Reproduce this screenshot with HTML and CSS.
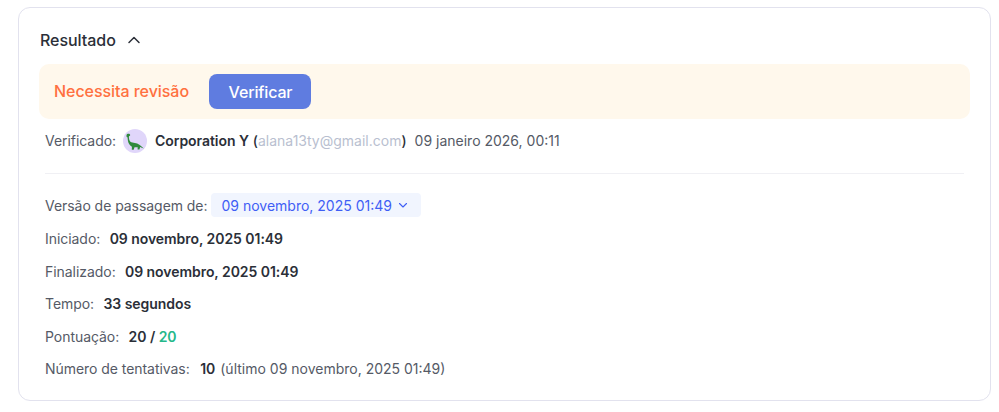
FILE: index.html
```html
<!DOCTYPE html>
<html lang="pt">
<head>
  <meta charset="UTF-8">
  <title>Resultado</title>
  <link rel="stylesheet" href="styles.css">
</head>
<body>
  <section class="card">
    <div class="card-title">
      <span>Resultado</span>
      <svg class="chevron-up" width="14" height="14" viewBox="0 0 14 14" fill="none"><path d="M2 9.500 7 4.500l5 5" stroke="#2b2f38" stroke-width="1.500" stroke-linecap="round" stroke-linejoin="round"/></svg>
    </div>

    <div class="banner">
      <span class="banner-text">Necessita revisão</span>
      <button class="verify-btn">Verificar</button>
    </div>

    <div class="verified">
      <span class="label">Verificado:</span>
      <span class="avatar">
        <svg width="24" height="24" viewBox="0 0 24 24"><path d="M3.500 6.200C3.800 4.800 5.800 4.400 6.800 5.300c.7.700.4 1.500-.4 1.700-.5.200-.6.600-.5 1.300.1 1.800.4 3.400 1.500 4.500 1.100 1 2.800.9 4.500 1.200 3 .5 6 2.300 8.900 5.600-1.500-.6-2.700-1.200-3.700-1.500l-.6 2.500h-1.900l.1-2.300-3.200-.1-.8 2.500H8.800l.1-3c-2.400-1.200-3.700-3.500-4.100-6.700-.1-1-.2-2-.3-2.700-.5 0-1.100-.6-1-1.300z" fill="#2f8a3c"/></svg>
      </span>
      <span class="name">Corporation Y</span>
      <span class="paren">(<span class="email">alana13ty@gmail.com</span>)</span>
      <span class="date">09 janeiro 2026, 00:11</span>
    </div>

    <hr class="divider">

    <div class="details">
      <div class="row row-version">
        <span class="label">Versão de passagem de:</span>
        <span class="version-select">
          09 novembro, 2025 01:49
          <svg width="10" height="10" viewBox="0 0 10 10" fill="none"><path d="M1.500 3.500 5 7l3.500-3.500" stroke="#3f5ef5" stroke-width="1.100" stroke-linecap="round" stroke-linejoin="round"/></svg>
        </span>
      </div>
      <div class="row"><span class="label">Iniciado:</span><b>09 novembro, 2025 01:49</b></div>
      <div class="row"><span class="label">Finalizado:</span><b>09 novembro, 2025 01:49</b></div>
      <div class="row"><span class="label">Tempo:</span><b>33 segundos</b></div>
      <div class="row"><span class="label">Pontuação:</span><b>20 / <span class="score">20</span></b></div>
      <div class="row row-tries"><span class="label">Número de tentativas:</span><b>10</b><span class="last-try">(último 09 novembro, 2025 01:49)</span></div>
    </div>
  </section>
</body>
</html>
```

FILE: styles.css
```css
body {
  margin: 0;
  padding: 7px 8px 11px 18px;
  background: #ffffff;
  font-family: Inter, sans-serif;
  font-size: 14px;
  letter-spacing: -0.05px;
  color: #555a66;
}

.card {
  box-sizing: border-box;
  width: 973px;
  height: 394px;
  padding: 20px 20px 0;
  border: 1px solid #e2e2ee;
  border-radius: 12px;
}

.card-title {
  display: flex;
  align-items: center;
  gap: 11px;
  height: 24px;
  padding-left: 1px;
  font-size: 16px;
  font-weight: 500;
  color: #2b2f38;
}

.banner {
  display: flex;
  align-items: center;
  gap: 20px;
  height: 55px;
  margin-top: 12px;
  padding: 0 15px;
  border-radius: 10px;
  background: #fff8ec;
}

.banner-text {
  font-size: 16px;
  font-weight: 500;
  line-height: 22px;
  margin-top: -1px;
  color: #ff7040;
}

.verify-btn {
  width: 102px;
  height: 35px;
  padding: 0 0 0 1px;
  border: none;
  border-radius: 8px;
  background: #5f7ce0;
  color: #ffffff;
  font-family: inherit;
  font-size: 16px;
  font-weight: 500;
  letter-spacing: -0.15px;
}

.verified {
  display: flex;
  align-items: center;
  height: 24px;
  margin-top: 10px;
  padding-left: 6px;
}

.verified .label {
  margin-top: -1px;
}

.avatar {
  display: flex;
  width: 24px;
  height: 24px;
  margin-left: 7px;
  border-radius: 50%;
  background: #e0d6fa;
}

.name,
.paren,
.date {
  margin-top: -1px;
}

.name {
  margin-left: 8px;
  font-weight: 600;
  color: #2b2f38;
}

.paren {
  margin-left: 4px;
  font-weight: 500;
  color: #2b2f38;
}

.email {
  font-weight: 400;
  letter-spacing: 0;
  color: #b9bfd0;
}

.date {
  margin-left: 8px;
  letter-spacing: 0;
}

.divider {
  height: 1px;
  margin: 20px 6px 19px;
  border: none;
  background: #f0f0f4;
}

.details {
  display: flex;
  flex-direction: column;
  gap: 8.6px;
  padding-left: 6px;
}

.row {
  display: flex;
  align-items: center;
  gap: 9.4px;
  height: 24px;
}

.row b {
  font-weight: 600;
  color: #2b2f38;
}

.row-version {
  gap: 4px;
  margin-bottom: 1px;
}

.row-tries {
  gap: 10.5px;
}

.version-select {
  display: flex;
  align-items: center;
  gap: 6px;
  height: 24px;
  padding: 0 13px 0 10px;
  border-radius: 4px;
  background: #f1f5fe;
  color: #3f5ef5;
  letter-spacing: 0;
}

.score {
  color: #25b88a;
}

.last-try {
  margin-left: -5.500px;
  letter-spacing: 0;
}
```
